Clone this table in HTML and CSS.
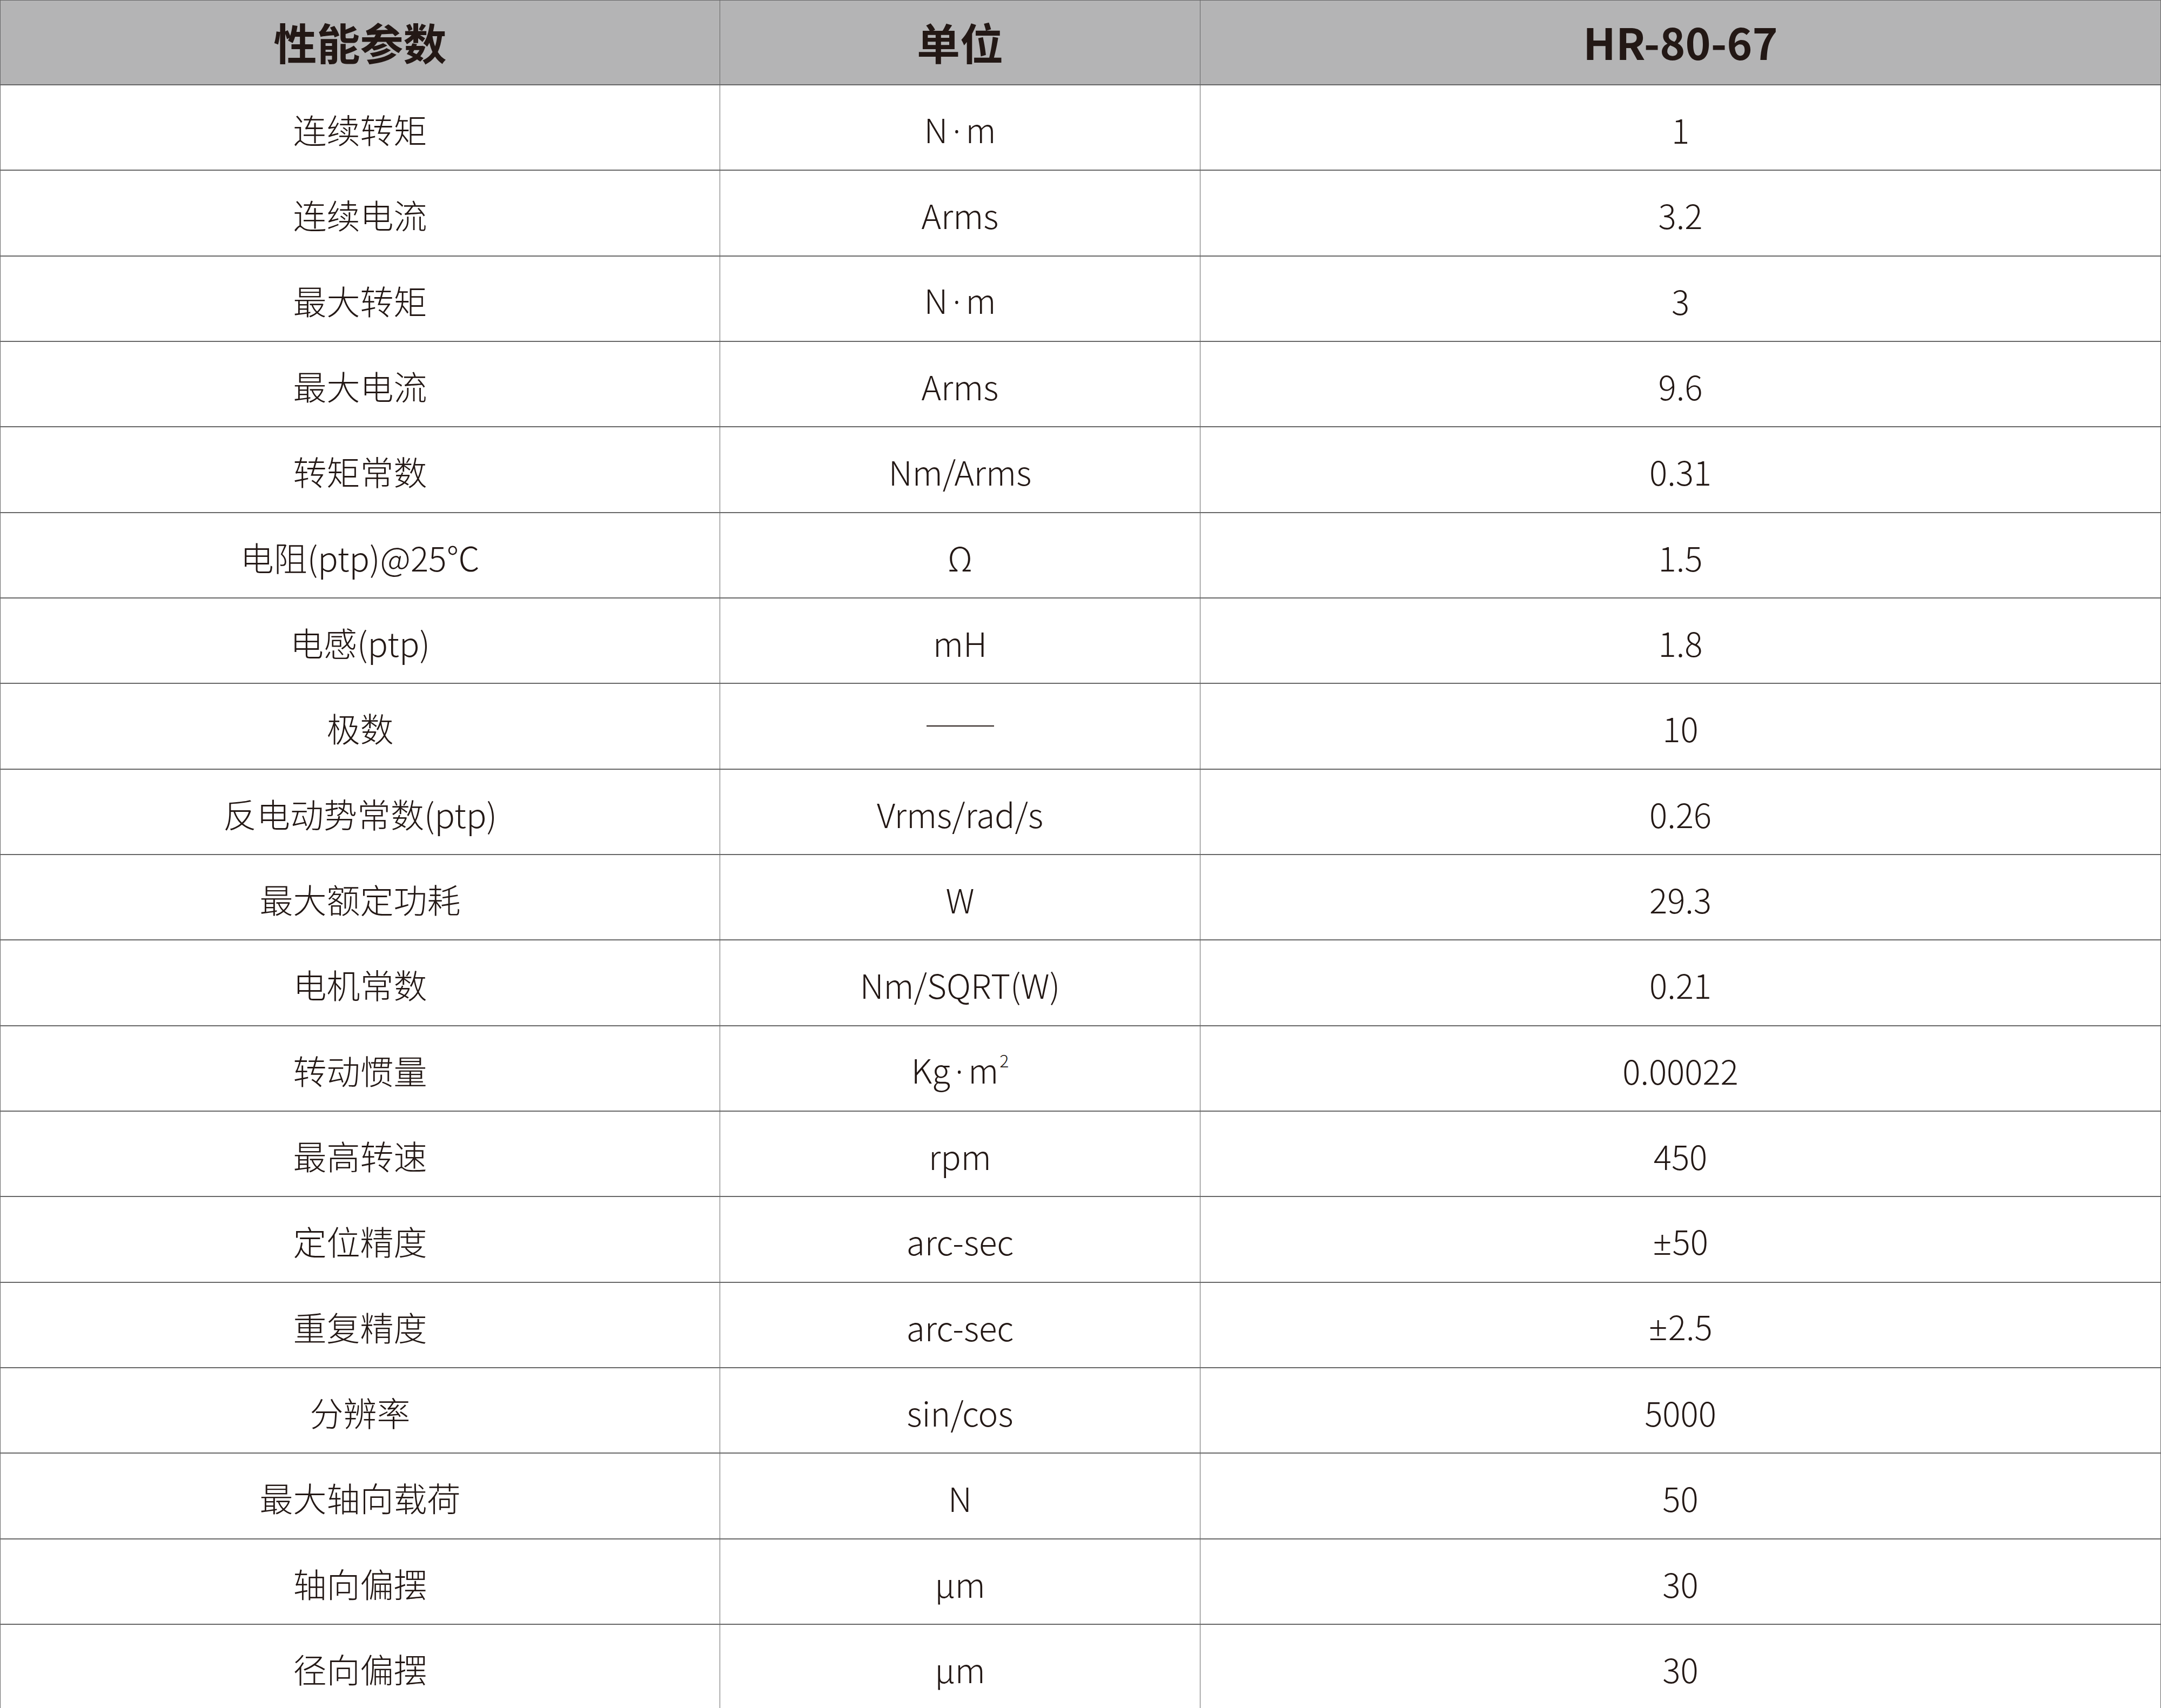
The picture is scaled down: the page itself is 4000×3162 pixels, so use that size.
FILE: index.html
```html
<!DOCTYPE html>
<html lang="zh-CN">
<head>
<meta charset="utf-8">
<title>HR-80-67 性能参数</title>
<link rel="stylesheet" href="styles.css">
</head>
<body>
<div class="spec">
  <div class="row head">
    <div class="cell c1">性能参数</div>
    <div class="cell c2">单位</div>
    <div class="cell c3">HR-80-67</div>
  </div>
  <div class="row"><div class="cell c1">连续转矩</div><div class="cell c2"><span class="txt">N<span class="dot">·</span>m</span></div><div class="cell c3">1</div></div>
  <div class="row"><div class="cell c1">连续电流</div><div class="cell c2">Arms</div><div class="cell c3">3.2</div></div>
  <div class="row"><div class="cell c1">最大转矩</div><div class="cell c2"><span class="txt">N<span class="dot">·</span>m</span></div><div class="cell c3">3</div></div>
  <div class="row"><div class="cell c1">最大电流</div><div class="cell c2">Arms</div><div class="cell c3">9.6</div></div>
  <div class="row"><div class="cell c1">转矩常数</div><div class="cell c2">Nm/Arms</div><div class="cell c3">0.31</div></div>
  <div class="row"><div class="cell c1">电阻(ptp)@25℃</div><div class="cell c2">Ω</div><div class="cell c3">1.5</div></div>
  <div class="row"><div class="cell c1">电感(ptp)</div><div class="cell c2">mH</div><div class="cell c3">1.8</div></div>
  <div class="row"><div class="cell c1">极数</div><div class="cell c2"><span class="dash"></span></div><div class="cell c3">10</div></div>
  <div class="row"><div class="cell c1">反电动势常数(ptp)</div><div class="cell c2">Vrms/rad/s</div><div class="cell c3">0.26</div></div>
  <div class="row"><div class="cell c1">最大额定功耗</div><div class="cell c2">W</div><div class="cell c3">29.3</div></div>
  <div class="row"><div class="cell c1">电机常数</div><div class="cell c2">Nm/SQRT(W)</div><div class="cell c3">0.21</div></div>
  <div class="row"><div class="cell c1">转动惯量</div><div class="cell c2"><span class="txt">Kg<span class="dot">·</span>m<sup class="sq">2</sup></span></div><div class="cell c3">0.00022</div></div>
  <div class="row"><div class="cell c1">最高转速</div><div class="cell c2">rpm</div><div class="cell c3">450</div></div>
  <div class="row"><div class="cell c1">定位精度</div><div class="cell c2">arc-sec</div><div class="cell c3"><span class="txt"><span class="pm">±</span>50</span></div></div>
  <div class="row"><div class="cell c1">重复精度</div><div class="cell c2">arc-sec</div><div class="cell c3"><span class="txt"><span class="pm">±</span>2.5</span></div></div>
  <div class="row"><div class="cell c1">分辨率</div><div class="cell c2">sin/cos</div><div class="cell c3">5000</div></div>
  <div class="row"><div class="cell c1">最大轴向载荷</div><div class="cell c2">N</div><div class="cell c3">50</div></div>
  <div class="row"><div class="cell c1">轴向偏摆</div><div class="cell c2">μm</div><div class="cell c3">30</div></div>
  <div class="row"><div class="cell c1">径向偏摆</div><div class="cell c2">μm</div><div class="cell c3">30</div></div>
</div>
</body>
</html>
```
FILE: styles.css
```css
html, body {
  margin: 0;
  padding: 0;
  background: #ffffff;
}
body {
  width: 4000px;
  height: 3162px;
  overflow: hidden;
  font-family: "Noto Sans CJK SC", "Noto Sans", sans-serif;
  color: #231815;
}
.spec {
  display: flex;
  flex-direction: column;
  border-top: 1px solid #666666;
  border-left: 1px solid #666666;
  width: 4000px;
  box-sizing: border-box;
}
.row {
  display: grid;
  grid-template-columns: 1332px 889px 1778px;
  height: 158.33px;
  box-sizing: border-box;
  border-bottom: 2px solid #666666;
  flex: none;
}
.row.head {
  height: 157px;
  background: #b4b4b5;
}
.cell {
  display: flex;
  align-items: center;
  justify-content: center;
  border-right: 1px solid #666666;
  font-size: 62px;
  font-weight: 300;
  line-height: 1;
  padding-top: 6px;
  box-sizing: border-box;
  white-space: nowrap;
}
.row.head .cell {
  font-size: 80px;
  font-weight: 700;
  padding-top: 0;
  padding-bottom: 5px;
}
.txt {
  display: block;
  line-height: 1;
}
.dot {
  font-family: "Noto Sans", sans-serif;
  margin: 0 9px;
}
.pm {
  font-family: "Noto Sans", sans-serif;
  font-weight: 300;
  margin-right: 1px;
}
.dash {
  display: block;
  width: 125px;
  height: 2px;
  background: #231815;
  margin-top: -6px;
}
.sq {
  font-size: 32px;
  line-height: 0;
  vertical-align: 30px;
  margin-left: 2px;
}
```
